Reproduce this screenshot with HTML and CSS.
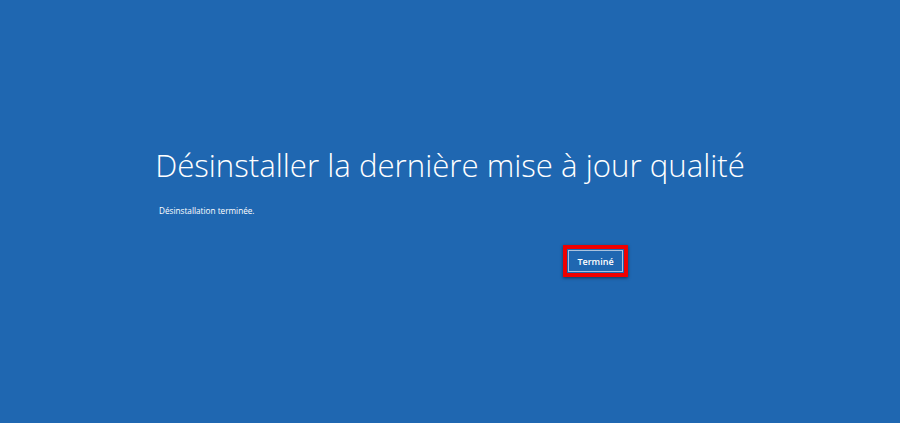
FILE: index.html
```html
<!DOCTYPE html>
<html lang="fr">

<head>
    <meta charset="UTF-8">
    <meta name="viewport" content="width=device-width, initial-scale=1.0">
    <title>Désinstaller la dernière mise à jour qualité</title>
    <link rel="stylesheet" href="styles.css">
</head>

<body>
    <main class="panel">
        <h1 class="title">Désinstaller la dernière mise à jour qualité</h1>
        <p class="status">Désinstallation terminée.</p>
        <div class="actions">
            <span class="highlight">
                <button class="done">Terminé</button>
            </span>
        </div>
    </main>
</body>

</html>
```

FILE: styles.css
```css
* {
    margin: 0;
    border: 0;
    padding: 0;
    box-sizing: border-box;
}

body {
    height: 100vh;
    background-color: #1f67b1;
    color: white;
    font-family: "Open Sans", "Liberation Sans", sans-serif;
    overflow: hidden;
}

.panel {
    width: 600px;
    margin: 0 auto;
    padding-top: 143px;
    display: flex;
    flex-direction: column;
}

.title {
    font-weight: 300;
    font-size: 31.2px;
    line-height: 44px;
    text-align: center;
    white-space: nowrap;
}

.status {
    margin-top: 18px;
    padding-left: 9px;
    font-size: 8.2px;
    line-height: 12px;
}

.actions {
    margin-top: 28px;
    padding-left: 413px;
    display: flex;
}

.highlight {
    display: inline-flex;
    border: 4px solid #f00000;
    box-shadow: 0 1px 3px rgba(0, 0, 0, 0.5);
}

.done {
    width: 55px;
    height: 22px;
    margin: 1px;
    border: 1px solid #a9c2de;
    background-color: #1f67b1;
    color: white;
    font-family: "Open Sans", "Liberation Sans", sans-serif;
    font-weight: 600;
    font-size: 9px;
}
```
